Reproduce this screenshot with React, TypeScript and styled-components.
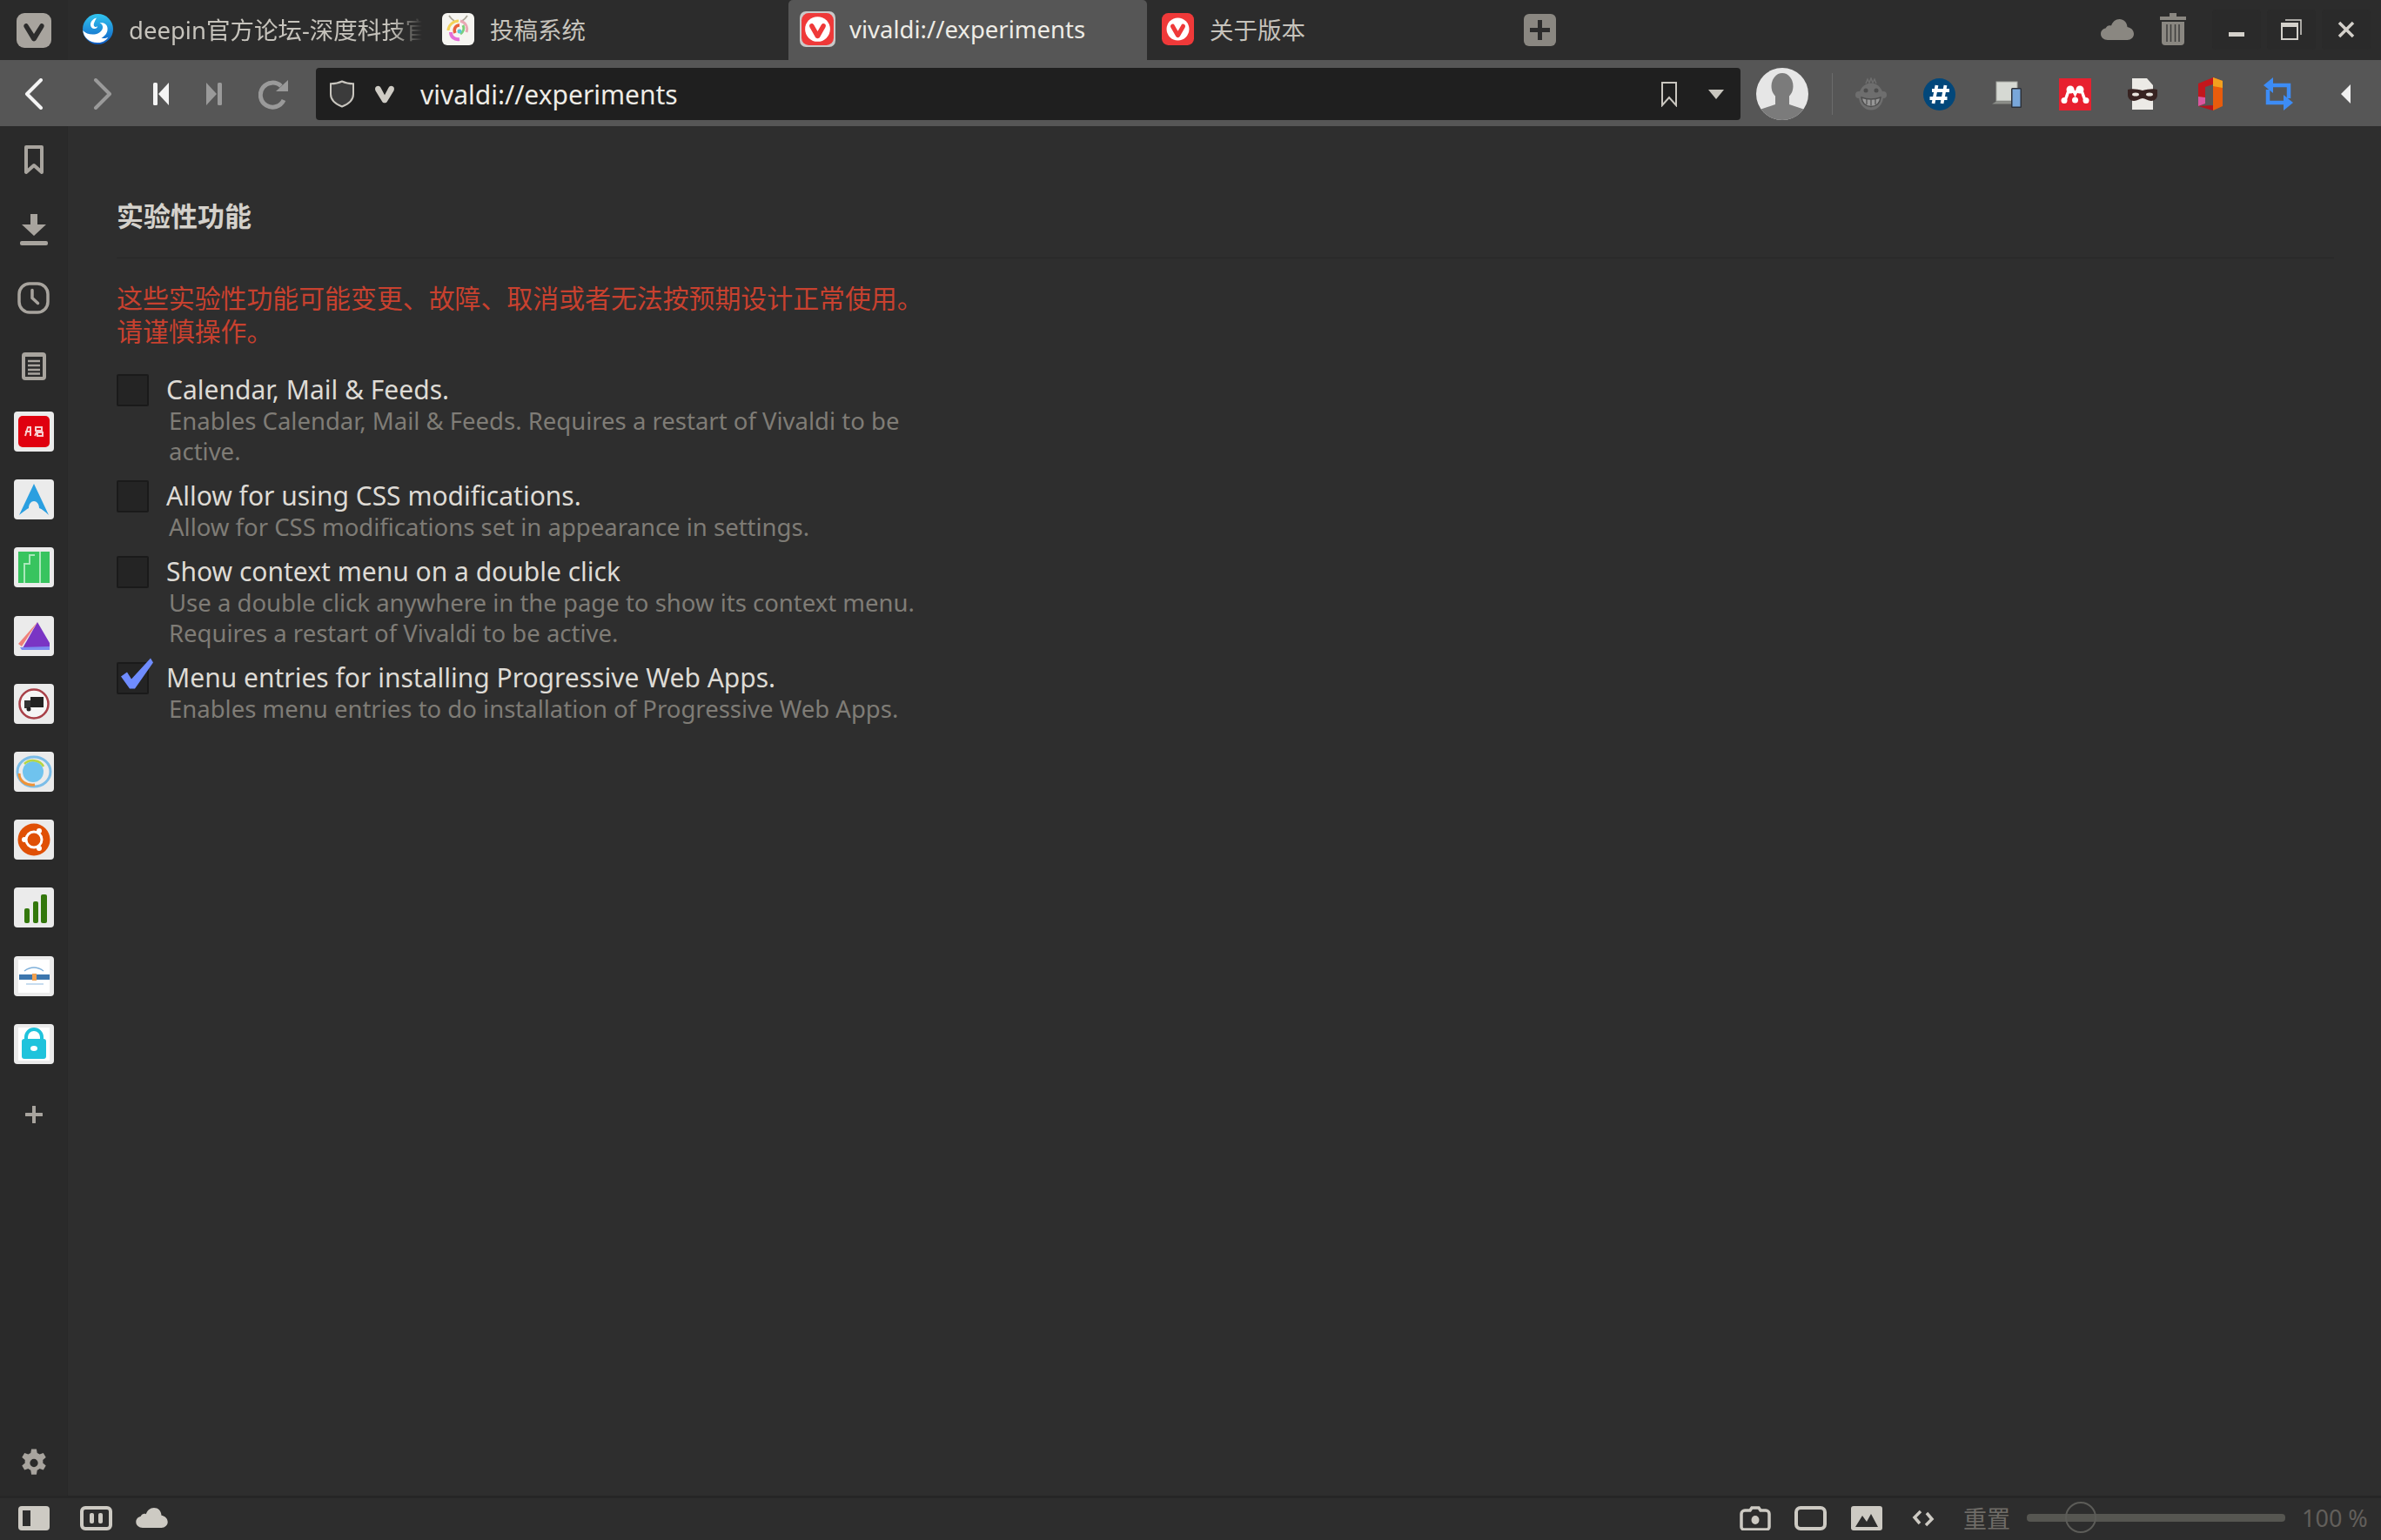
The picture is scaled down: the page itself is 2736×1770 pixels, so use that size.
import React from "react";
import styled, { createGlobalStyle } from "styled-components";

const GlobalStyle = createGlobalStyle`
  html, body {
    margin: 0;
    padding: 0;
    background: #2e2e2e;
    overflow: hidden;
  }
  * {
    box-sizing: border-box;
  }
`;

const Shell = styled.div`
  width: 2736px;
  height: 1770px;
  display: flex;
  flex-direction: column;
  font-family: "Noto Sans", "Noto Sans CJK SC", sans-serif;
  background: #2e2e2e;
`;

const TabBar = styled.div`
  height: 69px;
  flex: none;
  display: flex;
  align-items: stretch;
  background: #2c2c2c;
`;

const AppButton = styled.div`
  width: 78px;
  display: flex;
  align-items: center;
  justify-content: center;
  background: #2a2a2a;
`;

const Tab = styled.div<{ $active?: boolean; $gapLeft?: number }>`
  width: ${(p) => (p.$active ? 412 : 413)}px;
  margin-left: ${(p) => p.$gapLeft ?? 0}px;
  display: flex;
  align-items: center;
  gap: ${(p) => (p.$active ? 16 : 18)}px;
  padding-left: ${(p) => (p.$active ? 13 : 17)}px;
  padding-right: 6px;
  padding-bottom: 3px;
  background: ${(p) => (p.$active ? "#565656" : "transparent")};
  border-radius: 5px 5px 0 0;
  color: ${(p) => (p.$active ? "#eeece6" : "#c6c3bc")};
  font-size: 27.5px;
  white-space: nowrap;
  overflow: hidden;
`;

const TabTitle = styled.span<{ $fade?: boolean }>`
  flex: 1;
  overflow: hidden;
  ${(p) =>
    p.$fade
      ? "mask-image: linear-gradient(to right, #000 90%, transparent 100%);"
      : ""}
`;

const NewTab = styled.div`
  width: 37px;
  height: 37px;
  margin: 16px 0 0 20px;
  display: flex;
  align-items: center;
  justify-content: center;
`;

const TabBarRight = styled.div`
  margin-left: auto;
  display: flex;
  align-items: center;
  padding-right: 12px;
  padding-bottom: 2px;
`;

const WindowButton = styled.div<{ $first?: boolean }>`
  width: 56px;
  height: 46px;
  margin-left: ${(p) => (p.$first ? 13 : 7)}px;
  display: flex;
  align-items: center;
  justify-content: center;
  background: #2a2a2a;
  border-radius: 4px;
`;

const TrayButton = styled.div<{ $w: number }>`
  width: ${(p) => p.$w}px;
  display: flex;
  justify-content: center;
`;

const Toolbar = styled.div`
  height: 76px;
  flex: none;
  display: flex;
  align-items: center;
  background: #565656;
`;

const NavButton = styled.div<{ $w: number; $pad?: number }>`
  width: ${(p) => p.$w}px;
  flex: none;
  display: flex;
  justify-content: center;
  align-items: center;
  padding-left: ${(p) => p.$pad ?? 0}px;
  margin-top: 2px;
`;

const AddressField = styled.div`
  width: 1637px;
  height: 60px;
  flex: none;
  margin-left: 11px;
  margin-top: 2px;
  padding: 0 18px 0 15px;
  display: flex;
  align-items: center;
  background: #1f1f1f;
  border-radius: 4px;
  color: #eeece6;
  font-size: 30px;
`;

const AddressText = styled.span`
  margin-left: 26px;
`;

const FieldIcon = styled.span<{ $left?: number; $auto?: boolean }>`
  display: flex;
  margin-left: ${(p) => (p.$auto ? "auto" : `${p.$left ?? 0}px`)};
`;

const Avatar = styled.div`
  width: 60px;
  height: 60px;
  flex: none;
  margin: 2px 0 0 18px;
`;

const Separator = styled.div`
  width: 1px;
  height: 48px;
  flex: none;
  margin: 2px 5px 0 27px;
  background: #6b6b6b;
`;

const ExtensionButton = styled.div`
  width: 78px;
  flex: none;
  display: flex;
  justify-content: center;
  margin-top: 2px;
`;

const Body = styled.div`
  flex: 1;
  display: flex;
  min-height: 0;
`;

const Sidebar = styled.div`
  width: 78px;
  flex: none;
  display: flex;
  flex-direction: column;
  align-items: center;
  background: #2a2a2a;
  border-right: 1px solid #282828;
`;

const SideIcon = styled.div<{ $nudge?: number }>`
  width: 46px;
  height: 78px;
  flex: none;
  padding-top: ${(p) => p.$nudge ?? 0}px;
  display: flex;
  align-items: center;
  justify-content: center;
`;

const SideTile = styled.div`
  width: 46px;
  height: 46px;
  margin: 16px 0 16.2px;
  flex: none;
  border-radius: 4px;
  background: #ebebeb;
  overflow: hidden;
  display: flex;
`;

const SidePush = styled.div`
  margin-top: auto;
  height: 78px;
  display: flex;
  align-items: center;
  padding-top: 2px;
`;

const Content = styled.main`
  flex: 1;
  padding: 0 54px 0 56px;
`;

const Heading = styled.h2`
  height: 152px;
  margin: 0;
  padding-top: 81px;
  font-size: 31px;
  font-weight: 700;
  line-height: 44px;
  color: #d4d1cb;
  border-bottom: 1px solid #272727;
`;

const Section = styled.div`
  width: 930px;
`;

const Warning = styled.p`
  margin: 27px 0 30px;
  font-size: 29.9px;
  line-height: 38px;
  color: #c8412f;
`;

const Option = styled.label`
  position: relative;
  display: grid;
  grid-template-columns: 37px 1fr;
  column-gap: 20px;
  padding-bottom: 16px;
`;

const Box = styled.span`
  position: relative;
  width: 37px;
  height: 37px;
  background: #242424;
  border: 2px solid #1a1a1a;
  border-radius: 2px;
`;

const Tick = styled.svg`
  position: absolute;
  left: 3px;
  top: -7px;
`;

const OptionText = styled.div`
  display: flex;
  flex-direction: column;
`;

const OptionLabel = styled.span`
  font-size: 30px;
  line-height: 36px;
  color: #dedbd5;
`;

const OptionHint = styled.span`
  margin-left: 3px;
  font-size: 27.5px;
  line-height: 35px;
  color: #7f7c76;
`;

const StatusBar = styled.div`
  height: 51px;
  flex: none;
  display: flex;
  align-items: center;
  background: #2d2d2d;
  border-top: 3px solid #262626;
  padding-left: 21px;
  padding-bottom: 3px;
`;

const StatusButton = styled.div<{ $w: number; $left: number }>`
  width: ${(p) => p.$w}px;
  margin-left: ${(p) => p.$left}px;
  flex: none;
  display: flex;
  justify-content: center;
`;

const ResetLabel = styled.span`
  margin-left: 33px;
  font-size: 27px;
  color: #6f6c67;
`;

const ZoomTrack = styled.div`
  position: relative;
  width: 297px;
  height: 9px;
  margin-left: 19px;
  border-radius: 4px;
  background: #565651;
`;

const ZoomThumb = styled.div`
  position: absolute;
  left: 44px;
  top: -14px;
  width: 36px;
  height: 36px;
  border-radius: 50%;
  border: 2px solid #5c5c58;
`;

const ZoomValue = styled.span`
  margin-left: 19px;
  font-size: 27px;
  color: #625f5b;
`;

const ICON = "#a8a49e";
const LIGHT = "#cdcac3";

const VivaldiV = ({ size, color }: { size: number; color: string }) => (
  <svg width={size} height={size} viewBox="0 0 24 24">
    <path
      d="M4.2 5.2c1.7-1.2 3.4-.6 4.2 1L12 13l3.6-6.8c.8-1.6 2.500-2.200 4.200-1 1.200 1 1.200 2.600.5 4L14.300 19c-1 1.700-3.600 1.700-4.600 0L3.700 9.200c-.7-1.400-.7-3 .5-4z"
      fill={color}
    />
  </svg>
);

const VivaldiFavicon = ({ size, framed }: { size: number; framed?: boolean }) => (
  <svg width={size} height={size} viewBox="0 0 40 40">
    {framed && <rect width="40" height="40" rx="7" fill="#c9c9c9" />}
    <rect x={framed ? 2 : 0} y={framed ? 2 : 0} width={framed ? 36 : 40} height={framed ? 36 : 40} rx="8" fill="#ef3939" />
    <circle cx="20" cy="20" r="14" fill="#fff" />
    <path d="M11.500 14.500c1.500-1.500 3.500-1 4.300.6L20 22.500l4.200-7.400c.8-1.600 2.800-2.100 4.300-.6 1 1.100.8 2.500.2 3.600L22.500 29c-1.100 1.900-3.900 1.900-5 0l-6.200-10.900c-.6-1.100-.8-2.500.2-3.600z" fill="#ef3939" />
  </svg>
);

const DeepinFavicon = () => (
  <svg width="35" height="35" viewBox="0 0 35 35">
    <defs>
      <linearGradient id="deepinBlue" x1="0" y1="0" x2="0" y2="1">
        <stop offset="0" stopColor="#32c6f0" />
        <stop offset="1" stopColor="#0e5cc4" />
      </linearGradient>
    </defs>
    <circle cx="17.500" cy="17.500" r="17.500" fill="url(#deepinBlue)" />
    <path d="M.3 19c3 3.500 8 5 13 4.500 5-.5 9-3.500 9.700-7.500.4-2.500-1-5-3.500-5.500 4-1 8.500 1 9 5.500.6 5-2.500 9.500-7 11.500 3 1 6 .5 8-1-2.500 4-6.500 6.500-11.500 6.500C8.500 33.500 1 27.500.3 19z" fill="#fff" />
    <path d="M16 4.500c-4 1-7 4-7 8 0 2.500 2 4.500 4.500 4.500 2 0 3.500-1.300 3.500-3-.7 1-2 1.300-3 .8-1.500-.8-1.600-3-.7-4.800.7-1.700 1.500-3.500 2.700-5.500z" fill="#fff" />
  </svg>
);

const SubmitFavicon = () => (
  <svg width="37" height="37" viewBox="0 0 37 37">
    <rect width="37" height="37" rx="6" fill="#f6f5f1" />
    <path d="M8 3c2 3 4 5 6 6M29 3c-2 3-4 5-6 6" fill="none" stroke="#a9a497" strokeWidth="1.800" />
    <path d="M19 9c-6 0-12 5-12 11" fill="none" stroke="#f3d25a" strokeWidth="3" />
    <path d="M21 9c6 2 9 7 7 13" fill="none" stroke="#e9a8b4" strokeWidth="3" />
    <path d="M24 14c2 4 0 8-3 10" fill="none" stroke="#7ccf7a" strokeWidth="3" />
    <path d="M20 14c-5 0-7 5-5 9" fill="none" stroke="#e8603c" strokeWidth="3.500" />
    <path d="M10 22c0 5 4 9 10 8" fill="none" stroke="#e46fd8" strokeWidth="4" />
    <circle cx="20" cy="21" r="2.500" fill="#5cc6d8" />
  </svg>
);

const Plus = () => (
  <svg width="37" height="37" viewBox="0 0 37 37">
    <rect width="37" height="37" rx="6" fill="#8a8781" />
    <path d="M18.500 7v23M7 18.500h23" stroke="#2c2c2c" strokeWidth="5" />
  </svg>
);

const CloudShape = ({ w, h, color }: { w: number; h: number; color: string }) => (
  <svg width={w} height={h} viewBox="0 0 38 24">
    <path
      d="M8 24C3.500 24 0 21 0 17c0-3.500 2.500-6 5.500-6.500C7 7.500 9.500 6.500 12 7.500 13.500 3 17 0 21.500 0 26.500 0 30 3.500 30.500 9c4 .8 7.500 3.500 7.500 8 0 4-3.500 7-7.500 7z"
      fill={color}
    />
  </svg>
);

const Trash = () => (
  <svg width="30" height="37" viewBox="0 0 30 37">
    <path d="M11 0h8v4h11v4H0V4h11z" fill="#8a8781" />
    <path d="M2 10h26v23a4 4 0 0 1-4 4H6a4 4 0 0 1-4-4z" fill="#8a8781" />
    <path d="M8 13v20M12.500 13v20M17.500 13v20M22 13v20" stroke="#3e3e3c" strokeWidth="1.500" />
  </svg>
);

const Minimize = () => (
  <svg width="20" height="20" viewBox="0 0 20 20">
    <rect x="1" y="13" width="18" height="5" fill="#d4d1cb" />
  </svg>
);

const Restore = () => (
  <svg width="24" height="24" viewBox="0 0 24 24">
    <path d="M5 1h18v17" fill="none" stroke="#d4d1cb" strokeWidth="1.500" />
    <rect x="1" y="5" width="18" height="18" fill="none" stroke="#d4d1cb" strokeWidth="2" />
    <rect x="1" y="5" width="18" height="4" fill="#d4d1cb" />
  </svg>
);

const CloseX = () => (
  <svg width="20" height="20" viewBox="0 0 20 20">
    <path d="M2 2l16 16M18 2L2 18" stroke="#d4d1cb" strokeWidth="3.500" />
  </svg>
);

const Chevron = ({ dir, color }: { dir: "left" | "right"; color: string }) => (
  <svg width="24" height="36" viewBox="0 0 24 36">
    <path
      d={dir === "left" ? "M20 2L4 18l16 16" : "M4 2l16 16L4 34"}
      fill="none"
      stroke={color}
      strokeWidth="4"
      strokeLinecap="round"
      strokeLinejoin="round"
    />
  </svg>
);

const SkipIcon = ({ flip, color }: { flip?: boolean; color: string }) => (
  <svg width="20" height="28" viewBox="0 0 20 28">
    <g transform={flip ? "matrix(-1 0 0 1 20 0)" : undefined}>
      <rect x="1" y="1" width="5" height="26" rx="1.500" fill={color} />
      <path d="M19 1v26L7 14z" fill={color} />
    </g>
  </svg>
);

const Reload = () => (
  <svg width="36" height="36" viewBox="0 0 36 36">
    <path d="M29 25A14 14 0 1 1 26 9" fill="none" stroke="#9a9a9a" strokeWidth="5" />
    <path d="M20 15h14V2z" fill="#9a9a9a" />
  </svg>
);

const Shield = () => (
  <svg width="30" height="32" viewBox="0 0 30 32">
    <path d="M15 1.500c4 2 8 2.700 13 2.700v12c0 6.500-6 11.500-13 14.300C8 27.700 2 22.700 2 16.200v-12c5 0 9-.7 13-2.700z" fill="#3b3b3b" stroke="#c9c6bf" strokeWidth="2" />
  </svg>
);

const BookmarkOutline = () => (
  <svg width="20" height="30" viewBox="0 0 20 30">
    <path d="M2 2h16v26l-8-9-8 9z" fill="none" stroke="#c9c6bf" strokeWidth="2" />
  </svg>
);

const DropArrow = () => (
  <svg width="20" height="12" viewBox="0 0 20 12">
    <path d="M1 1h18l-9 11z" fill="#c9c6bf" />
  </svg>
);

const AvatarPic = () => (
  <svg width="60" height="60" viewBox="0 0 60 60">
    <circle cx="30" cy="30" r="30" fill="#e6e6e6" />
    <clipPath id="avatarClip">
      <circle cx="30" cy="30" r="30" />
    </clipPath>
    <g clipPath="url(#avatarClip)" fill="#7b7b7b">
      <ellipse cx="30" cy="21" rx="12.500" ry="15" />
      <path d="M22 32h16v10l18 6v12H4V48l18-6z" />
    </g>
  </svg>
);

const Monkey = () => (
  <svg width="36" height="38" viewBox="0 0 36 38">
    <circle cx="4" cy="20" r="4" fill="#6e6e6e" />
    <circle cx="32" cy="20" r="4" fill="#6e6e6e" />
    <ellipse cx="18" cy="22" rx="14" ry="15.500" fill="#6e6e6e" />
    <path d="M12 7l2-5 2 4 2-5 2 5 2-4 2 5" stroke="#6e6e6e" strokeWidth="1.500" fill="none" />
    <circle cx="12" cy="15" r="2.500" fill="#4d4d4d" />
    <circle cx="24" cy="15" r="2.500" fill="#4d4d4d" />
    <path d="M7 23c7 2.500 15 2.500 22 0-1 7-5 10.500-11 10.500S8 30 7 23z" fill="#969696" stroke="#4d4d4d" strokeWidth="1.500" />
    <path d="M13 25v6M18 25.500v7M23 25v6" stroke="#4d4d4d" strokeWidth="1.200" />
  </svg>
);

const Hash = () => (
  <svg width="37" height="37" viewBox="0 0 37 37">
    <circle cx="18.500" cy="18.500" r="18.500" fill="#02477a" />
    <path d="M15.500 8L11.500 29M25.500 8L21.500 29M10 14h20M7.500 23h20" stroke="#fff" strokeWidth="3.800" />
  </svg>
);

const Devices = () => (
  <svg width="34" height="34" viewBox="0 0 34 34">
    <rect x="5" y="3" width="24" height="22" fill="#d6d9d3" stroke="#a5a7a2" />
    <path d="M0 28.500l5-3h19v3z" fill="#8b8d88" />
    <rect x="22" y="10" width="12" height="23" rx="1.500" fill="#2c3038" />
    <rect x="23.500" y="11.500" width="9" height="20" fill="#79a7da" />
  </svg>
);

const Mendeley = () => (
  <svg width="37" height="37" viewBox="0 0 37 37">
    <rect width="37" height="37" fill="#e8202f" />
    <g fill="none" stroke="#fff" strokeWidth="3.500">
      <path d="M6 26c2-2 3-6 4-9 1-3 3-5 3.500-5M31 26c-2-2-3-6-4-9-1-3-3-5-3.500-5" />
      <path d="M14 13c1.500 0 3 2 4.500 5 1.500-3 3-5 4.500-5" />
    </g>
    <g fill="#fff">
      <circle cx="13" cy="13" r="4.500" />
      <circle cx="24" cy="13" r="4.500" />
      <circle cx="18.500" cy="25" r="3.500" />
      <circle cx="6" cy="25.500" r="3.500" />
      <circle cx="31" cy="25.500" r="3.500" />
    </g>
  </svg>
);

const Incognito = () => (
  <svg width="36" height="38" viewBox="0 0 36 38">
    <path d="M6 1h17l7 8v28H6z" fill="#eceae6" />
    <path d="M1 14c5-1.500 11-.5 17 1 6-1.500 12-2.500 17-1v6c0 4-3 7-7 7-4 0-7-3-10-3s-6 3-10 3c-4 0-7-3-7-7z" fill="#372321" />
    <ellipse cx="10" cy="19.500" rx="4" ry="2" fill="#e7e3dc" />
    <ellipse cx="26" cy="19.500" rx="4" ry="2" fill="#e7e3dc" />
  </svg>
);

const OfficeLogo = () => (
  <svg width="30" height="38" viewBox="0 0 30 38">
    <path d="M18 0l11 4v29l-11 5z" fill="#e85c0c" />
    <path d="M18 0L1 7v26l8-3V11l9-3z" fill="#c3161c" />
    <path d="M1 22l8 1v7l-8 3z" fill="#d9569f" />
    <path d="M18 0l11 4v8l-11-2z" fill="#f3a01f" />
    <path d="M1 33l17-1v6z" fill="#b3141d" />
  </svg>
);

const Retweet = () => (
  <svg width="36" height="38" viewBox="0 0 36 38" fill="none" stroke="#3d8cf5" strokeWidth="4.500">
    <path d="M10 9h20v15" />
    <path d="M6 14v15h20" />
    <path d="M12 0L1 9l11 9z" fill="#3d8cf5" stroke="none" />
    <path d="M24 20l11 9-11 9z" fill="#3d8cf5" stroke="none" />
  </svg>
);

const Collapse = () => (
  <svg width="12" height="22" viewBox="0 0 12 22">
    <path d="M11 0v22L0 11z" fill="#f0f0f0" />
  </svg>
);

const BookmarkSide = () => (
  <svg width="24" height="36" viewBox="0 0 24 36">
    <path d="M3 3h18v29l-9-8-9 8z" fill="none" stroke={ICON} strokeWidth="4" strokeLinejoin="round" />
  </svg>
);

const Download = () => (
  <svg width="32" height="36" viewBox="0 0 32 36">
    <path d="M12 0h8v12h10L16 25 2 12h10z" fill={ICON} />
    <rect y="31" width="32" height="5" rx="2" fill={ICON} />
  </svg>
);

const Clock = () => (
  <svg width="37" height="37" viewBox="0 0 37 37" fill="none" stroke={ICON}>
    <rect x="2" y="2" width="33" height="33" rx="12" strokeWidth="3.500" />
    <path d="M17 9.500v9l6.500 6" strokeWidth="3.500" strokeLinecap="round" />
  </svg>
);

const Notes = () => (
  <svg width="28" height="32" viewBox="0 0 28 32">
    <rect width="28" height="32" rx="4" fill={ICON} />
    <rect x="4" y="5" width="20" height="23" fill="#2a2a2a" />
    <path d="M7 10h14M7 15h14M7 20h14M7 24.500h14" stroke={ICON} strokeWidth="2.500" />
  </svg>
);

const TileSvg = styled.svg`
  width: 46px;
  height: 46px;
  filter: blur(0.7px);
`;

const tiles: React.ReactNode[] = [
  <TileSvg key="red" viewBox="0 0 46 46">
    <rect x="5" y="5" width="36" height="36" rx="5" fill="#e0000f" />
    <g stroke="#f8ccce" strokeWidth="2" fill="none">
      <path d="M13 28l3-10h3v10M13 23h7" />
      <path d="M25 18h7v4h-7zM24 28l3-6M27 24h6v4h-6z" />
    </g>
  </TileSvg>,
  <TileSvg key="arch" viewBox="0 0 46 46">
    <path d="M23 5L6 41c5-4 9-7 11-8 0-5 3-8 6-8s6 3 6 8c3 1 7 4 11 8z" fill="#2b9fe0" />
  </TileSvg>,
  <TileSvg key="green" viewBox="0 0 46 46">
    <rect x="5" y="5" width="36" height="36" fill="#38c45f" />
    <path d="M24 9h-6v10h-6v22M30 5v36" stroke="#a9e8ba" strokeWidth="2" fill="none" />
  </TileSvg>,
  <TileSvg key="prism" viewBox="0 0 46 46">
    <path d="M27 7L41 31v6H10z" fill="#7a35c4" />
    <path d="M27 7L5 32l4 3z" fill="#f0807a" />
    <path d="M7 36l34-1v4H9z" fill="#7d8cf0" />
  </TileSvg>,
  <TileSvg key="truck" viewBox="0 0 46 46">
    <circle cx="23" cy="23" r="16.500" fill="#f5f5f5" stroke="#a84048" strokeWidth="2.500" />
    <rect x="19" y="15" width="15" height="12" fill="#222" />
    <rect x="12" y="19" width="7" height="9" fill="#333" />
    <circle cx="17" cy="29" r="2.500" fill="#222" />
  </TileSvg>,
  <TileSvg key="globe" viewBox="0 0 46 46">
    <ellipse cx="23" cy="23" rx="19" ry="17" fill="none" stroke="#7bbde8" strokeWidth="3" />
    <circle cx="22" cy="23" r="12" fill="#6fc3ee" />
    <path d="M6 25c0 9 8 14 18 13" fill="none" stroke="#ef9236" strokeWidth="3" />
    <path d="M12 14c6-6 18-5 22 3" fill="none" stroke="#b5d644" strokeWidth="2.500" />
  </TileSvg>,
  <TileSvg key="ubuntu" viewBox="0 0 46 46">
    <circle cx="23" cy="23" r="18.500" fill="#e05006" />
    <circle cx="23" cy="23" r="9" fill="none" stroke="#fff" strokeWidth="3" />
    <circle cx="12" cy="23" r="3" fill="#fff" />
    <circle cx="29" cy="13" r="3" fill="#fff" />
    <circle cx="29" cy="33" r="3" fill="#fff" />
  </TileSvg>,
  <TileSvg key="bars" viewBox="0 0 46 46">
    <g fill="#33770c">
      <rect x="12" y="24" width="6" height="17" rx="2" />
      <rect x="22" y="16" width="6" height="25" rx="2" />
      <rect x="31" y="8" width="7" height="33" rx="2" />
    </g>
  </TileSvg>,
  <TileSvg key="unify" viewBox="0 0 46 46">
    <rect x="5" y="4" width="36" height="38" fill="#fff" />
    <path d="M12 17c7-5 15-5 22 0" fill="none" stroke="#7fb0da" strokeWidth="1.500" />
    <path d="M6 21h15v6H6zM26 21h15v6H26z" fill="#3c76ae" />
    <rect x="21" y="20" width="5" height="8" fill="#f0a050" />
    <rect x="14" y="31" width="20" height="2" fill="#c7dcef" />
  </TileSvg>,
  <TileSvg key="lock" viewBox="0 0 46 46">
    <rect x="5" y="4" width="36" height="38" fill="#fff" />
    <path d="M14 18v-3a9 9 0 0 1 18 0v3" fill="none" stroke="#1fc3dc" strokeWidth="4" />
    <rect x="9" y="17" width="28" height="23" rx="3" fill="#1fc3dc" />
    <ellipse cx="23" cy="28" rx="4" ry="3" fill="#fff" />
  </TileSvg>,
];

const SidePlus = () => (
  <svg width="20" height="20" viewBox="0 0 20 20">
    <path d="M10 1v18M1 10h18" stroke={ICON} strokeWidth="4" strokeLinecap="round" />
  </svg>
);

const Gear = () => (
  <svg width="32" height="33" viewBox="0 0 24 24">
    <path
      fill={ICON}
      fillRule="evenodd"
      d="M9.800 0h4.400l.6 3.300c.8.300 1.500.7 2.100 1.200l3.200-1.100 2.200 3.800-2.600 2.200c.1.900.1 1.700 0 2.600l2.600 2.200-2.200 3.800-3.200-1.100c-.6.500-1.300.9-2.100 1.200l-.6 3.800H9.800l-.6-3.800c-.8-.3-1.500-.7-2.100-1.200l-3.200 1.100-2.200-3.800 2.600-2.200c-.1-.9-.1-1.700 0-2.600L1.700 7.200l2.200-3.800 3.200 1.100c.6-.5 1.300-.9 2.100-1.200zM12 8.500a3.500 3.500 0 1 0 0 7 3.500 3.500 0 0 0 0-7z"
    />
  </svg>
);

const PanelToggle = () => (
  <svg width="36" height="28" viewBox="0 0 36 28">
    <rect width="36" height="28" rx="4" fill={LIGHT} />
    <rect x="5" y="5" width="9" height="18" fill="#2d2d2d" />
  </svg>
);

const TilingToggle = () => (
  <svg width="37" height="28" viewBox="0 0 37 28">
    <rect x="2" y="2" width="33" height="24" rx="4" fill="none" stroke={LIGHT} strokeWidth="4" />
    <rect x="11" y="8" width="5" height="12" rx="2" fill={LIGHT} />
    <rect x="21" y="8" width="5" height="12" rx="2" fill={LIGHT} />
  </svg>
);

const Camera = () => (
  <svg width="36" height="28" viewBox="0 0 36 28">
    <path d="M12 5l2-3h8l2 3h6a4 4 0 0 1 4 4v15a3 3 0 0 1-3 3H5a3 3 0 0 1-3-3V9a4 4 0 0 1 4-4z" fill="none" stroke={LIGHT} strokeWidth="3.500" />
    <ellipse cx="18" cy="16" rx="4.500" ry="5" fill={LIGHT} />
  </svg>
);

const WindowFrame = () => (
  <svg width="37" height="28" viewBox="0 0 37 28">
    <rect x="2" y="2" width="33" height="24" rx="5" fill="none" stroke={LIGHT} strokeWidth="4" />
  </svg>
);

const ImageToggle = () => (
  <svg width="36" height="28" viewBox="0 0 36 28">
    <rect width="36" height="28" rx="3" fill={LIGHT} />
    <path d="M5 24l8-13 5 7 5-9 8 15z" fill="#2d2d2d" />
  </svg>
);

const CodeToggle = () => (
  <svg width="26" height="26" viewBox="0 0 26 26">
    <path d="M10 5L3 12l6 7M17 7l6 7-7 7" fill="none" stroke={LIGHT} strokeWidth="3.500" />
  </svg>
);

const extensions = [Monkey, Hash, Devices, Mendeley, Incognito, OfficeLogo, Retweet, Collapse];

const options = [
  {
    label: "Calendar, Mail & Feeds.",
    hint: "Enables Calendar, Mail & Feeds. Requires a restart of Vivaldi to be active.",
    checked: false,
  },
  {
    label: "Allow for using CSS modifications.",
    hint: "Allow for CSS modifications set in appearance in settings.",
    checked: false,
  },
  {
    label: "Show context menu on a double click",
    hint: "Use a double click anywhere in the page to show its context menu. Requires a restart of Vivaldi to be active.",
    checked: false,
  },
  {
    label: "Menu entries for installing Progressive Web Apps.",
    hint: "Enables menu entries to do installation of Progressive Web Apps.",
    checked: true,
  },
];

const App: React.FC = () => {
  return (
    <>
      <GlobalStyle />
      <Shell>
        <TabBar>
          <AppButton>
            <svg width="40" height="40" viewBox="0 0 40 40">
              <rect width="40" height="40" rx="9" fill="#a8a49e" />
              <path d="M9 13c1.500-1.500 3.500-1 4.300.6L20 24l6.700-10.400c.8-1.600 2.800-2.100 4.300-.6 1 1.100.8 2.500.2 3.600L22.500 31c-1.100 1.900-3.900 1.900-5 0L8.800 16.600c-.6-1.100-.8-2.500.2-3.600z" fill="#2c2c2c" />
            </svg>
          </AppButton>
          <Tab>
            <DeepinFavicon />
            <TabTitle $fade>deepin官方论坛-深度科技官网</TabTitle>
          </Tab>
          <Tab>
            <SubmitFavicon />
            <TabTitle>投稿系统</TabTitle>
          </Tab>
          <Tab $active $gapLeft={2}>
            <VivaldiFavicon size={41} framed />
            <TabTitle>vivaldi://experiments</TabTitle>
          </Tab>
          <Tab>
            <VivaldiFavicon size={37} />
            <TabTitle>关于版本</TabTitle>
          </Tab>
          <NewTab>
            <Plus />
          </NewTab>
          <TabBarRight>
            <TrayButton $w={64}>
              <CloudShape w={38} h={24} color="#8a8781" />
            </TrayButton>
            <TrayButton $w={64}>
              <Trash />
            </TrayButton>
            <WindowButton $first>
              <Minimize />
            </WindowButton>
            <WindowButton>
              <Restore />
            </WindowButton>
            <WindowButton>
              <CloseX />
            </WindowButton>
          </TabBarRight>
        </TabBar>
        <Toolbar>
          <NavButton $w={77}>
            <Chevron dir="left" color="#f4f4f4" />
          </NavButton>
          <NavButton $w={78} $pad={3}>
            <Chevron dir="right" color="#9a9a9a" />
          </NavButton>
          <NavButton $w={60}>
            <SkipIcon color="#f4f4f4" />
          </NavButton>
          <NavButton $w={62}>
            <SkipIcon flip color="#9a9a9a" />
          </NavButton>
          <NavButton $w={75}>
            <Reload />
          </NavButton>
          <AddressField>
            <Shield />
            <FieldIcon $left={19}>
              <VivaldiV size={30} color="#cfccc5" />
            </FieldIcon>
            <AddressText>vivaldi://experiments</AddressText>
            <FieldIcon $auto>
              <BookmarkOutline />
            </FieldIcon>
            <FieldIcon $left={34}>
              <DropArrow />
            </FieldIcon>
          </AddressField>
          <Avatar>
            <AvatarPic />
          </Avatar>
          <Separator />
          {extensions.map((Icon, i) => (
            <ExtensionButton key={i}>
              <Icon />
            </ExtensionButton>
          ))}
        </Toolbar>
        <Body>
          <Sidebar>
            <SideIcon>
              <BookmarkSide />
            </SideIcon>
            <SideIcon $nudge={4}>
              <Download />
            </SideIcon>
            <SideIcon $nudge={4}>
              <Clock />
            </SideIcon>
            <SideIcon $nudge={6}>
              <Notes />
            </SideIcon>
            {tiles.map((tile, i) => (
              <SideTile key={i}>{tile}</SideTile>
            ))}
            <SideIcon $nudge={7}>
              <SidePlus />
            </SideIcon>
            <SidePush>
              <Gear />
            </SidePush>
          </Sidebar>
          <Content>
            <Heading>实验性功能</Heading>
            <Section>
              <Warning>这些实验性功能可能变更、故障、取消或者无法按预期设计正常使用。请谨慎操作。</Warning>
              {options.map((option) => (
                <Option key={option.label}>
                  <Box>
                    {option.checked && (
                      <Tick width="40" height="38" viewBox="0 0 40 37">
                        <path d="M0 21l7-5 5 8L34 0l3 5-21 30h-6z" fill="#6f8cff" />
                      </Tick>
                    )}
                  </Box>
                  <OptionText>
                    <OptionLabel>{option.label}</OptionLabel>
                    <OptionHint>{option.hint}</OptionHint>
                  </OptionText>
                </Option>
              ))}
            </Section>
          </Content>
        </Body>
        <StatusBar>
          <StatusButton $w={36} $left={0}>
            <PanelToggle />
          </StatusButton>
          <StatusButton $w={37} $left={35}>
            <TilingToggle />
          </StatusButton>
          <StatusButton $w={37} $left={27}>
            <CloudShape w={37} h={23} color={LIGHT} />
          </StatusButton>
          <StatusButton $w={36} $left={1806}>
            <Camera />
          </StatusButton>
          <StatusButton $w={37} $left={27}>
            <WindowFrame />
          </StatusButton>
          <StatusButton $w={36} $left={28}>
            <ImageToggle />
          </StatusButton>
          <StatusButton $w={26} $left={34}>
            <CodeToggle />
          </StatusButton>
          <ResetLabel>重置</ResetLabel>
          <ZoomTrack>
            <ZoomThumb />
          </ZoomTrack>
          <ZoomValue>100 %</ZoomValue>
        </StatusBar>
      </Shell>
    </>
  );
};

export default App;
